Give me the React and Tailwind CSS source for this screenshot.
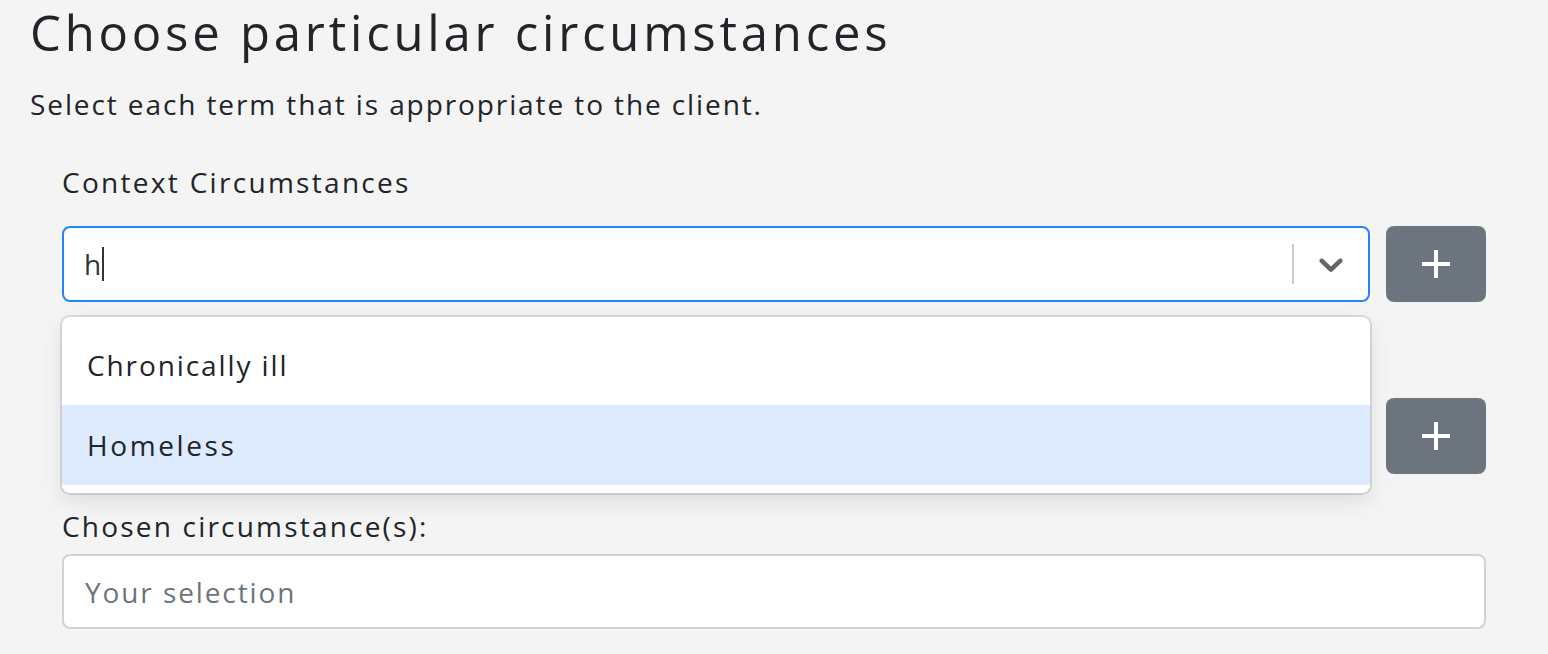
export default function App() {
  const font = { fontFamily: "'Open Sans', Lato, sans-serif" };
  return (
    <div className="min-h-[654px] w-full bg-[#f4f4f4] text-[#212529]" style={font}>
      <div className="px-[30px] pt-[2px]">
        <h1 className="text-[49px] leading-[60px] font-normal tracking-[3.8px]">Choose particular circumstances</h1>
        <p className="mt-[22px] text-[28px] leading-[40px] tracking-[1.9px]">Select each term that is appropriate to the client.</p>
        <div className="ml-[32px] w-[1424px] mt-[36px] tracking-[2px]">
          <label className="block text-[28px] leading-[44px] tracking-[2.3px]">Context Circumstances</label>
          <div className="relative mt-[22px]">
            <div className="flex gap-[16px]">
              <div className="flex-1 h-[76px] bg-white border-2 border-[#2684ff] rounded-[8px] flex items-center">
                <div className="flex-1 pl-[20px] text-[28px] text-[#333] flex items-center">
                  <span>h</span>
                  <span className="inline-block w-[2px] h-[34px] bg-[#333] -ml-[1px]"></span>
                </div>
                <div className="w-[2px] h-[40px] bg-[#ccc]"></div>
                <div className="w-[74px] flex items-center justify-center">
                  <svg width="40" height="40" viewBox="0 0 20 20" fill="#666">
                    <path d="M4.516 7.548c0.436-0.446 1.043-0.481 1.576 0l3.908 3.747 3.908-3.747c0.533-0.481 1.141-0.446 1.574 0 0.436 0.445 0.408 1.197 0 1.615-0.406 0.418-4.695 4.502-4.695 4.502-0.217 0.223-0.502 0.335-0.787 0.335s-0.57-0.112-0.789-0.335c0 0-4.287-4.084-4.695-4.502s-0.436-1.17 0-1.615z" />
                  </svg>
                </div>
              </div>
              <button className="w-[100px] h-[76px] bg-[#6c757d] rounded-[8px] flex items-center justify-center">
                <svg width="30" height="30" viewBox="0 0 30 30">
                  <path d="M15 1v28M1 15h28" stroke="white" strokeWidth="4" />
                </svg>
              </button>
            </div>
            <div className="absolute left-0 top-[91px] w-[1308px] bg-white rounded-[8px] py-[8px] z-10 shadow-[0_0_0_2px_rgba(0,0,0,0.1),0_8px_22px_rgba(0,0,0,0.1)]">
              <div className="h-[80px] flex items-center px-[25px] text-[28px] tracking-[1.9px]">Chronically ill</div>
              <div className="h-[80px] flex items-center px-[25px] text-[28px] tracking-[2.6px] bg-[#deebff]">Homeless</div>
            </div>
          </div>
          <label className="block text-[28px] leading-[44px] mt-[36px] invisible">Personal Circumstances</label>
          <div className="flex gap-[16px] mt-[16px]">
            <div className="flex-1 h-[76px] bg-white border-2 border-[#ccc] rounded-[8px]"></div>
            <button className="w-[100px] h-[76px] bg-[#6c757d] rounded-[8px] flex items-center justify-center">
              <svg width="30" height="30" viewBox="0 0 30 30">
                <path d="M15 1v28M1 15h28" stroke="white" strokeWidth="4" />
              </svg>
            </button>
          </div>
          <label className="block text-[28px] leading-[44px] mt-[30px] tracking-[2.2px]">Chosen circumstance(s):</label>
          <div className="mt-[6px] h-[75px] bg-white border-2 border-[#ced4da] rounded-[8px] flex items-center pl-[21px] text-[28px] text-[#6c757d] tracking-[1.9px]">
            Your selection
          </div>
        </div>
      </div>
    </div>
  );
}
